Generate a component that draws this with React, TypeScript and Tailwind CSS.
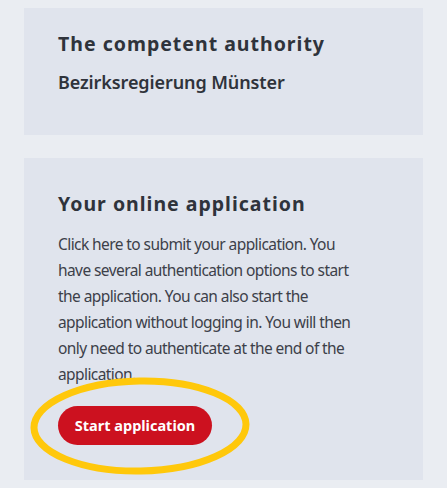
import React from "react";

const font = { fontFamily: '"Noto Sans", "Open Sans", sans-serif' };

export default function App() {
  return (
    <div
      className="w-[447px] h-[488px] overflow-hidden bg-[#eaedf2] pt-[8px] px-[24px] flex flex-col gap-[23px]"
      style={font}
    >
      <section className="bg-[#e0e4ed] h-[127px] pl-[34px] pt-[23px]">
        <h2 className="text-[19.5px] leading-[26px] font-bold tracking-[1px] text-[#2f333b]">
          The competent authority
        </h2>
        <p className="mt-[13px] text-[18px] leading-[24px] font-semibold tracking-[-0.1px] text-[#2f333b]">
          Bezirksregierung Münster
        </p>
      </section>

      <section className="relative bg-[#e0e4ed] h-[322px] pl-[34px] pr-[30px] pt-[33px]">
        <h2 className="text-[19.5px] leading-[26px] font-bold tracking-[1px] text-[#2f333b]">
          Your online application
        </h2>
        <p className="mt-[14px] text-[15.5px] leading-[26px] tracking-[-0.58px] text-[#3c4049] w-[312px]">
          Click here to submit your application. You have several authentication options to start
          the application. You can also start the application without logging in. You will then
          only need to authenticate at the end of the application.
        </p>
        <button className="mt-[19px] h-[39px] w-[154px] rounded-full bg-[#cc111f] text-white text-[14.5px] font-bold">
          Start application
        </button>
        {/* highlight ring drawn over the button */}
        <svg
          className="absolute left-[5px] top-[219px] pointer-events-none"
          width="222"
          height="100"
          viewBox="0 0 222 100"
        >
          <ellipse
            cx="111"
            cy="49"
            rx="106"
            ry="45"
            fill="none"
            stroke="#ffc80b"
            strokeWidth="7"
            transform="rotate(-1 111 49)"
          />
        </svg>
      </section>
    </div>
  );
}
